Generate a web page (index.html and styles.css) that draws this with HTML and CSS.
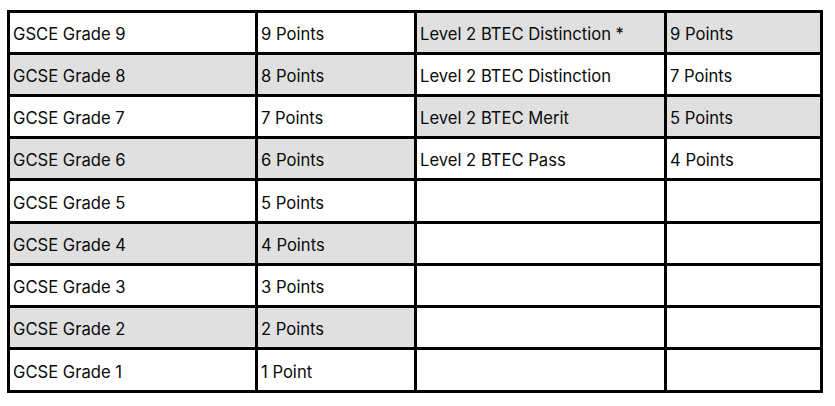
FILE: index.html
```html
<!DOCTYPE html>
<html lang="en">
<head>
<meta charset="utf-8">
<title>Points table</title>
<link rel="stylesheet" href="styles.css">
</head>
<body>
<div class="grid">
  <div class="cell">GSCE Grade 9</div><div class="cell">9 Points</div><div class="cell shade">Level 2 BTEC Distinction *</div><div class="cell shade">9 Points</div>
  <div class="cell shade">GCSE Grade 8</div><div class="cell shade">8 Points</div><div class="cell">Level 2 BTEC Distinction</div><div class="cell">7 Points</div>
  <div class="cell">GCSE Grade 7</div><div class="cell">7 Points</div><div class="cell shade">Level 2 BTEC Merit</div><div class="cell shade">5 Points</div>
  <div class="cell shade">GCSE Grade 6</div><div class="cell shade">6 Points</div><div class="cell">Level 2 BTEC Pass</div><div class="cell">4 Points</div>
  <div class="cell">GCSE Grade 5</div><div class="cell">5 Points</div><div class="cell"></div><div class="cell"></div>
  <div class="cell shade">GCSE Grade 4</div><div class="cell shade">4 Points</div><div class="cell"></div><div class="cell"></div>
  <div class="cell">GCSE Grade 3</div><div class="cell">3 Points</div><div class="cell"></div><div class="cell"></div>
  <div class="cell shade">GCSE Grade 2</div><div class="cell shade">2 Points</div><div class="cell"></div><div class="cell"></div>
  <div class="cell">GCSE Grade 1</div><div class="cell">1 Point</div><div class="cell"></div><div class="cell"></div>
</div>
</body>
</html>
```
FILE: styles.css
```css
html, body {
  margin: 0;
  background: #ffffff;
}
body {
  padding: 10px 0 0 7px;
  font-family: Inter, "Noto Sans", sans-serif;
  font-size: 16.6px;
  color: #0a0a0a;
}
.grid {
  display: grid;
  width: max-content;
  grid-template-columns: 245px 156px 247px 153px;
  grid-template-rows: 39px 39px 39px 39px 40px 39px 39px 39px 40px;
  gap: 3px;
  padding: 3px;
  background: #000000;
}
.cell {
  background: #ffffff;
  display: flex;
  align-items: center;
  padding: 3px 0 0 3px;
  white-space: nowrap;
}
.shade {
  background: #e0e0e0;
}
```
